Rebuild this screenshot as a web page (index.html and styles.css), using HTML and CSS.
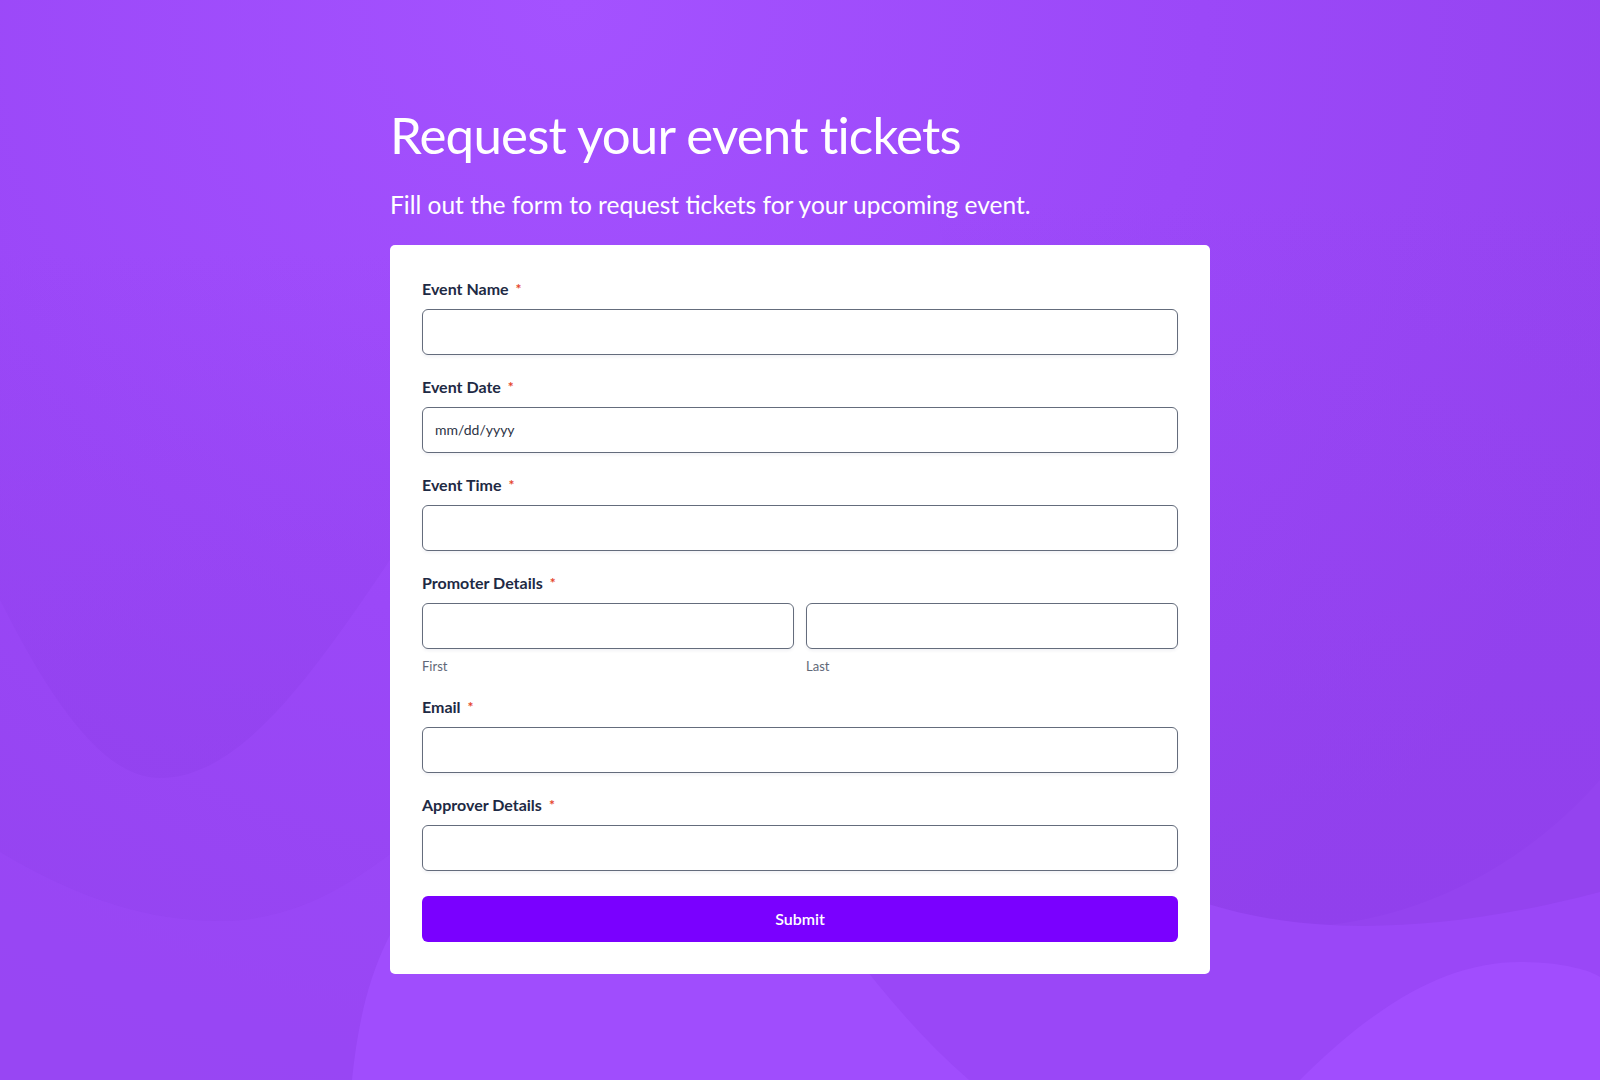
FILE: index.html
```html
<!DOCTYPE html>
<html lang="en">
<head>
<meta charset="utf-8">
<title>Request your event tickets</title>
<link rel="stylesheet" href="styles.css">
</head>
<body>
<main class="page">
  <h1 class="title">Request your event tickets</h1>
  <p class="subtitle">Fill out the form to request tickets for your upcoming event.</p>
  <form class="card">
    <div class="field">
      <label class="label">Event Name<span class="req">*</span></label>
      <input class="input" type="text">
    </div>
    <div class="field">
      <label class="label">Event Date<span class="req">*</span></label>
      <input class="input input-date" type="text" placeholder="mm/dd/yyyy">
    </div>
    <div class="field">
      <label class="label">Event Time<span class="req">*</span></label>
      <input class="input" type="text">
    </div>
    <div class="field">
      <label class="label">Promoter Details<span class="req">*</span></label>
      <div class="split">
        <div class="part">
          <input class="input" type="text">
          <span class="sublabel">First</span>
        </div>
        <div class="part">
          <input class="input" type="text">
          <span class="sublabel">Last</span>
        </div>
      </div>
    </div>
    <div class="field">
      <label class="label">Email<span class="req">*</span></label>
      <input class="input" type="email">
    </div>
    <div class="field">
      <label class="label">Approver Details<span class="req">*</span></label>
      <input class="input" type="text">
    </div>
    <button class="submit" type="button">Submit</button>
  </form>
</main>
</body>
</html>
```
FILE: styles.css
```css
html, body {
  margin: 0;
  padding: 0;
}

body {
  min-height: 1080px;
  font-family: Lato, "Open Sans", Arial, sans-serif;
  background-color: #9b48f8;
  background-image: url("data:image/svg+xml;utf8,<svg xmlns='http://www.w3.org/2000/svg' viewBox='0 0 1600 1080' preserveAspectRatio='none'><defs><radialGradient id='t' cx='570' cy='0' r='1150' gradientUnits='userSpaceOnUse'><stop offset='0' stop-color='%23a452ff'/><stop offset='0.55' stop-color='%239b48f8'/><stop offset='1' stop-color='%239443ef'/></radialGradient><linearGradient id='lb' x1='0' y1='250' x2='0' y2='780' gradientUnits='userSpaceOnUse'><stop offset='0' stop-color='%239040ec' stop-opacity='0'/><stop offset='1' stop-color='%239040ec' stop-opacity='0.55'/></linearGradient><linearGradient id='rb' x1='0' y1='200' x2='0' y2='930' gradientUnits='userSpaceOnUse'><stop offset='0' stop-color='%238f3eeb' stop-opacity='0'/><stop offset='1' stop-color='%238f3eeb' stop-opacity='0.6'/></linearGradient></defs><rect width='1600' height='1080' fill='url(%23t)'/><path d='M0 0 L0 600 C60 720 110 778 160 778 C250 778 330 650 430 500 C520 360 600 200 680 0 Z' fill='url(%23lb)'/><path d='M900 0 C980 500 1080 928 1280 928 C1420 928 1530 860 1600 780 L1600 0 Z' fill='url(%23rb)'/><path d='M0 852 C80 900 150 921 220 921 C300 921 360 880 420 830 L420 1080 L0 1080 Z' fill='%239d4afa' opacity='0.4'/><path d='M760 880 L1150 880 C1250 932 1400 945 1600 892 L1600 1080 L760 1080 Z' fill='%239a47f7'/><path d='M352 1080 C360 1000 380 930 430 880 L800 880 C850 950 900 1020 969 1080 Z' fill='%23a04dfd'/><path d='M1300 1080 C1380 1000 1450 962 1520 962 C1560 962 1590 970 1600 977 L1600 1080 Z' fill='%23a14dfe'/></svg>");
  background-size: 100% 1080px;
  background-repeat: no-repeat;
}

.page {
  width: 820px;
  margin: 0 auto;
  padding-top: 104px;
  padding-bottom: 106px;
}

.title {
  margin: 0;
  font-size: 51px;
  font-weight: 400;
  line-height: 1.2;
  color: #ffffff;
  letter-spacing: -0.8px;
}

.subtitle {
  margin: 25px 0 0;
  font-size: 24.5px;
  font-weight: 400;
  line-height: 1.2;
  color: #ffffff;
}

.card {
  margin-top: 25px;
  background: #ffffff;
  border-radius: 5px;
  padding: 34px 32px 32px;
  display: flex;
  flex-direction: column;
}

.field {
  display: flex;
  flex-direction: column;
  margin-bottom: 22px;
}

.label {
  font-size: 16px;
  font-weight: 700;
  line-height: 20px;
  color: #1e2a44;
  margin-bottom: 10px;
}

.req {
  color: #e5452c;
  font-size: 14px;
  margin-left: 7px;
  vertical-align: 1px;
}

.input {
  box-sizing: border-box;
  width: 100%;
  height: 46px;
  margin: 0;
  border: 1px solid #646c7c;
  border-radius: 6px;
  background: #ffffff;
  box-shadow: 0 2px 3px rgba(40, 40, 80, 0.06);
  padding: 0 12px;
  font-family: Lato, "Open Sans", Arial, sans-serif;
  font-size: 14px;
  color: #2c3345;
  outline: none;
}

.input-date::placeholder {
  color: #2c3345;
  opacity: 1;
}

.split {
  display: grid;
  grid-template-columns: 1fr 1fr;
  gap: 12px;
}

.part {
  display: flex;
  flex-direction: column;
}

.sublabel {
  margin-top: 8px;
  font-size: 13px;
  line-height: 18px;
  color: #5f6878;
}

.submit {
  margin-top: 3px;
  height: 46px;
  border: none;
  border-radius: 6px;
  background: #7a00ff;
  color: #ffffff;
  font-family: Lato, "Open Sans", Arial, sans-serif;
  font-size: 16px;
  font-weight: 600;
  cursor: pointer;
}
```
